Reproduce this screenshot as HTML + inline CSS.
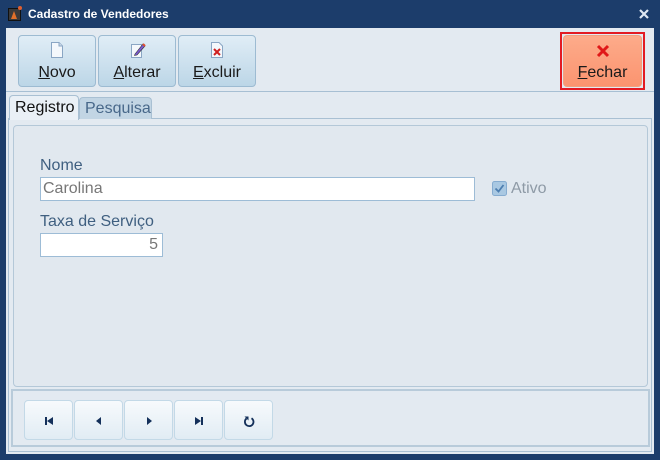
<!DOCTYPE html>
<html><head><meta charset="utf-8"><style>
*{box-sizing:border-box;margin:0;padding:0}
body{width:660px;height:460px;background:#1c3d6b;font-family:"Liberation Sans","DejaVu Sans",sans-serif;position:relative;overflow:hidden}
.a{position:absolute}
.title{left:28px;top:7px;color:#fff;font-weight:bold;font-size:12px}
.client{left:6px;top:28px;width:648px;height:426px;background:#e3eaf1}
.btn{position:absolute;top:35px;width:78px;height:52px;border:1px solid #9dbbd2;border-radius:4px;background:linear-gradient(#e0edf6,#bcd6e7);text-align:center;font-size:16px;color:#1a1a1a}
.btn .l{position:absolute;left:0;right:0;top:28px}
.btn svg{position:absolute;left:31px;top:6px}
.tab{position:absolute;top:95px;height:24px;font-size:16px;padding:3px 5px;border:1px solid #a9c0d3;border-bottom:none;border-radius:4px 4px 0 0}
.inp{position:absolute;background:#fff;border:1px solid #9dbcd6;font-size:16px;color:#777;padding:2px 2px}
.lab{position:absolute;font-size:16px;color:#3f5f80}
.nb{position:absolute;top:400px;width:49px;height:40px;border:1px solid #c3d9e7;border-radius:4px;background:linear-gradient(#f7fafc,#e1ecf4)}
.nb svg{position:absolute;left:17px;top:13px}
</style></head><body>
<svg class="a" style="left:8px;top:6px" width="14" height="15"><rect x="0.5" y="2.5" width="12" height="12" fill="#3a3a3a" stroke="#111"/><path d="M3 13 L6 5 L9 13Z" fill="#e0702a"/><circle cx="12" cy="2" r="2" fill="#e06030"/></svg>
<div class="a title">Cadastro de Vendedores</div>
<svg class="a" style="left:638px;top:8px" width="12" height="12"><path d="M2 2L10 10M10 2L2 10" stroke="#dfe8f2" stroke-width="2.2"/></svg>
<div class="a client"></div>
<div class="a" style="left:6px;top:91px;width:648px;height:1px;background:#a7bfd3"></div>

<div class="btn" style="left:18px"><svg width="14" height="16"><path d="M1.5 0.5H9L12.5 4V15.5H1.5Z" fill="#f4f8fc" stroke="#8aa6c4"/><path d="M9 .5V4H12.5" fill="#cfdcea" stroke="#8aa6c4"/></svg><div class="l"><u>N</u>ovo</div></div>
<div class="btn" style="left:98px"><svg width="16" height="16"><path d="M1.5 2.5H11.5V15.5H1.5Z" fill="#f4f8fc" stroke="#8aa6c4"/><path d="M5 12 L13 2 L15 4 L7 13 L4.5 13.5Z" fill="#7a5ad0" stroke="#333" stroke-width=".6"/><path d="M13 2L15 4" stroke="#e05030" stroke-width="2"/></svg><div class="l"><u>A</u>lterar</div></div>
<div class="btn" style="left:178px"><svg width="14" height="16"><path d="M1.5 0.5H9L12.5 4V15.5H1.5Z" fill="#f4f8fc" stroke="#8aa6c4"/><path d="M4 7L10 13M10 7L4 13" stroke="#d02020" stroke-width="2"/></svg><div class="l"><u>E</u>xcluir</div></div>

<div class="a" style="left:560px;top:32px;width:85px;height:58px;border:2px solid #e31b23"></div>
<div class="btn" style="left:563px;width:79px;background:linear-gradient(#fdab8a,#fb9470);border-color:#f0a080"><svg width="14" height="14" style="left:32px;top:8px"><path d="M2 2L12 12M12 2L2 12" stroke="#e01818" stroke-width="3"/></svg><div class="l"><u>F</u>echar</div></div>

<div class="a" style="left:8px;top:118px;width:644px;height:334px;border:1px solid #a9c0d3;background:#e3eaf1"></div>
<div class="tab" style="left:9px;width:70px;background:#eaf0f6;color:#111;height:25px">Registro</div>
<div class="tab" style="left:79px;width:73px;background:#c2d5e4;color:#48688a;top:97px;height:22px;padding-top:2px">Pesquisa</div>
<div class="a" style="left:13px;top:125px;width:635px;height:262px;border:1px solid #b4c8d8;border-radius:4px;background:#e1e8ef"></div>
<div class="a" style="left:11px;top:389px;width:639px;height:58px;border:2px solid #b8cbda;background:#e3eaf1"></div>

<div class="lab" style="left:40px;top:157px">Nome</div>
<div class="inp" style="left:40px;top:177px;width:435px;height:24px">Carolina</div>
<div class="lab" style="left:40px;top:213px">Taxa de Serviço</div>
<div class="inp" style="left:40px;top:233px;width:123px;height:24px;text-align:right;padding-right:4px">5</div>
<svg class="a" style="left:492px;top:181px" width="15" height="15"><rect x=".5" y=".5" width="14" height="14" rx="2" fill="#a9c8e2" stroke="#86acd0"/><path d="M3.5 7.5L6.5 10.5L11.5 4" stroke="#4d7eb0" stroke-width="1.8" fill="none"/></svg>
<div class="lab" style="left:511px;top:180px;color:#8e9aa6">Ativo</div>

<div class="nb" style="left:24px"><svg width="14" height="14"><rect x="3" y="3" width="2" height="8" fill="#14305a"/><path d="M11 3V11L5 7Z" fill="#14305a"/></svg></div>
<div class="nb" style="left:74px"><svg width="14" height="14"><path d="M9 3V11L4 7Z" fill="#14305a"/></svg></div>
<div class="nb" style="left:124px"><svg width="14" height="14"><path d="M5 3V11L10 7Z" fill="#14305a"/></svg></div>
<div class="nb" style="left:174px"><svg width="14" height="14"><path d="M3 3V11L9 7Z" fill="#14305a"/><rect x="9" y="3" width="2" height="8" fill="#14305a"/></svg></div>
<div class="nb" style="left:224px"><svg width="14" height="14"><path d="M9.5 4.2A4.3 4.3 0 1 1 4.5 4.5" stroke="#14305a" stroke-width="1.8" fill="none"/><path d="M2.5 2.5H6.5V6.5Z" fill="#14305a"/></svg></div>
</body></html>
